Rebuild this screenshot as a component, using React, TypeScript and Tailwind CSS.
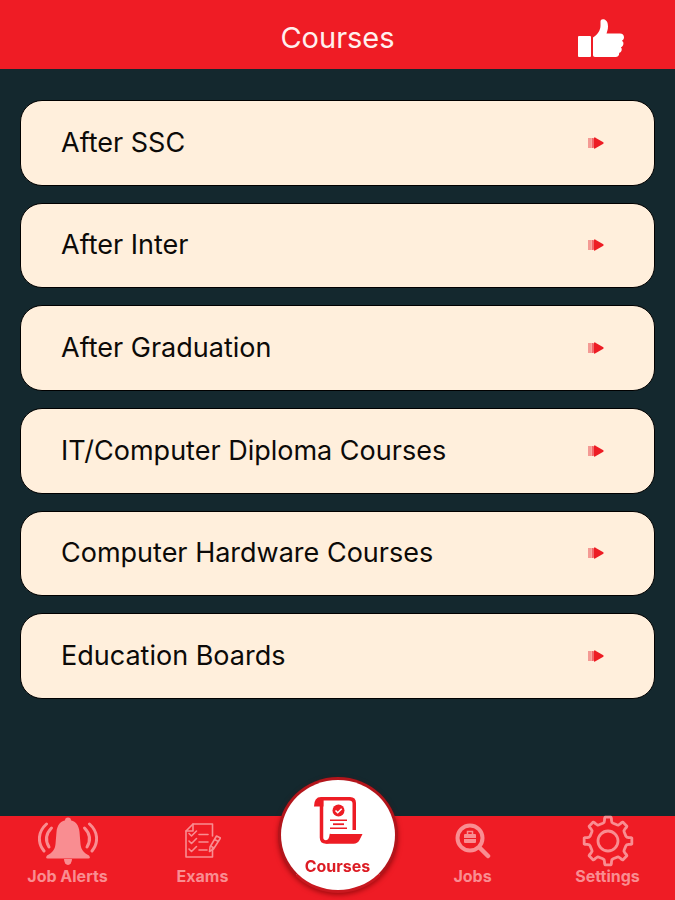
import { useState } from "react";

interface Course {
  id: string;
  title: string;
}

const courses: Course[] = [
  { id: "ssc", title: "After SSC" },
  { id: "inter", title: "After Inter" },
  { id: "graduation", title: "After Graduation" },
  { id: "it-diploma", title: "IT/Computer Diploma Courses" },
  { id: "hardware", title: "Computer Hardware Courses" },
  { id: "boards", title: "Education Boards" },
];

function ThumbIcon() {
  return (
    <svg viewBox="0 0 46 39" className="h-[39px] w-[46px]" fill="#fff" aria-hidden="true">
      <rect x="0" y="17" width="13" height="21" rx="1" />
      <path d="M15 18.500C20 15.500 22.500 11 22.500 6.500V2.500C22.500.8 24 0 25.500.3C29 1 30 4 30 7.500C30 10.500 29 13 28.500 14.500H42C44.500 14.500 46 16 46 18.200C46 20 45 21.300 43.800 21.800C45.300 22.600 45.700 24 45.300 25.500C45 27 44 28 42.800 28.300C43.800 29.200 44 30.500 43.500 31.800C43 33 42.200 33.600 41.200 33.900C41.300 36.500 39.800 38 37.500 38H17C15.700 38 15 37.200 15 36Z" />
    </svg>
  );
}

function PlayArrow() {
  return (
    <svg viewBox="0 0 16 12" className="h-3 w-4 shrink-0" aria-hidden="true">
      <rect x="0" y="1" width="3" height="10" fill="#f49a94" />
      <path d="M3.500 1h2l3 5-3 5h-2z" fill="#f2676a" />
      <path d="M6 .8Q6 0 7 .5L15.300 5.300Q16 6 15.300 6.700L7 11.500Q6 12 6 11.200z" fill="#ed1c24" />
    </svg>
  );
}

function BellIcon() {
  return (
    <svg viewBox="0 0 60 50" className="h-[50px] w-[60px]" fill="currentColor" aria-hidden="true">
      <circle cx="30" cy="4.500" r="3" />
      <path d="M30 4C22.500 4 19 9.500 18.500 16L17.500 28C17 34 14 37 9 39.500Q7 42.500 9.500 42.500H50.500Q53 42.500 51 39.500C46 37 43 34 42.500 28L41.500 16C41 9.500 37.500 4 30 4Z" />
      <path d="M26 43h8a4 6 0 0 1-8 0z" />
      <g fill="none" stroke="currentColor" strokeWidth="3" strokeLinecap="round">
        <path d="M8.500 8C-.5 16 -.5 27 6 35" />
        <path d="M13.500 12C7.500 18 7.500 25 11 31" />
        <path d="M51.500 8C60.500 16 60.500 27 54 35" />
        <path d="M46.500 12C52.500 18 52.500 25 49 31" />
      </g>
    </svg>
  );
}

function ExamIcon() {
  return (
    <svg
      viewBox="0 0 36 36"
      className="h-9 w-9"
      fill="none"
      stroke="currentColor"
      strokeWidth="1.600"
      strokeLinejoin="round"
      strokeLinecap="round"
      aria-hidden="true"
    >
      <path d="M27.500 13V1H8L1 8V34H27.500V25" />
      <path d="M1 8H8V1" />
      <path d="M4 10.500l2.500 2.500L11.500 8M4 18l2.500 2.500 5-5M4 26l2.500 2.500 5-5" />
      <path d="M14 11.500h9M14 19h9M14 27h8" />
      <path d="M31.500 13l4 2-7 11-4 2.500.5-4.500zM29.500 16.500l4 2M25.500 23l3.500 2" />
    </svg>
  );
}

function CertificateIcon() {
  return (
    <svg viewBox="0 0 50 48" className="h-12 w-[50px]" aria-hidden="true">
      <path d="M8 1H37Q43 1 43 7V34H39.500V7.500Q39.500 4.500 36 4.500H10.500V10.500H1Q1 1 8 1Z" fill="#ed1c24" />
      <path
        d="M8.500 4V41.500Q8.500 46 13 46Q17.500 46 18.500 38"
        fill="none"
        stroke="#ed1c24"
        strokeWidth="3.500"
        strokeLinejoin="round"
      />
      <path d="M19 38H49.500L46.500 44Q44.500 47.800 40.500 47.800H12.500Q18 45 19 38Z" fill="#ed1c24" />
      <circle cx="25.500" cy="14.500" r="6" fill="#ed1c24" />
      <path d="M22.500 14.500l2.200 2.200 4-4" fill="none" stroke="#fff" strokeWidth="1.600" />
      <path d="M17 24.200h17M17 32.200h17" stroke="#ed1c24" strokeWidth="1.500" />
      <path d="M20 28.200h11" stroke="#ed1c24" strokeWidth="1.800" />
    </svg>
  );
}

function JobSearchIcon() {
  return (
    <svg viewBox="0 0 36 36" className="h-9 w-9" fill="none" stroke="currentColor" aria-hidden="true">
      <circle cx="15" cy="15" r="12.500" strokeWidth="4" />
      <path d="M24.500 24.500L33 33" strokeWidth="4.500" strokeLinecap="round" />
      <rect x="9" y="11" width="12" height="9" rx="1" fill="currentColor" stroke="none" />
      <path d="M12.500 11V8.500h5V11" strokeWidth="1.500" />
      <path d="M9 15.500h12" stroke="#ed1c24" strokeWidth="1" />
    </svg>
  );
}

// One tooth as [degrees, radius], repeated eight times around the hub
const tooth = [
  [-16, 18.5],
  [-12, 19],
  [-9.5, 21],
  [-8.5, 23],
  [-7, 24],
  [7, 24],
  [8.5, 23],
  [9.5, 21],
  [12, 19],
  [16, 18.5],
];

const gearPoints = Array.from({ length: 8 }, (_, i) =>
  tooth.map(([offset, radius]) => {
    const angle = ((i * 45 + offset) * Math.PI) / 180;
    return `${(26 + radius * Math.sin(angle)).toFixed(2)},${(26 - radius * Math.cos(angle)).toFixed(2)}`;
  })
)
  .flat()
  .join(" ");

function GearIcon() {
  return (
    <svg
      viewBox="0 0 52 52"
      className="h-[52px] w-[52px]"
      fill="none"
      stroke="currentColor"
      strokeWidth="2.800"
      strokeLinejoin="round"
      aria-hidden="true"
    >
      <polygon points={gearPoints} />
      <circle cx="26" cy="26" r="10" />
    </svg>
  );
}

const tabs = [
  { id: "alerts", label: "Job Alerts", icon: <BellIcon /> },
  { id: "exams", label: "Exams", icon: <ExamIcon /> },
  { id: "courses", label: "Courses", icon: <CertificateIcon /> },
  { id: "jobs", label: "Jobs", icon: <JobSearchIcon /> },
  { id: "settings", label: "Settings", icon: <GearIcon /> },
];

export default function App() {
  const [activeTab, setActiveTab] = useState("courses");

  return (
    <div className="flex min-h-screen flex-col bg-[#14282e] font-['Inter',sans-serif]">
      <header className="grid h-[69px] grid-cols-[1fr_auto_1fr] items-center bg-[#ef1c25] pb-px">
        <h1 className="col-start-2 pt-2 text-[29px] leading-8 text-[#fff0ee]">Courses</h1>
        <button type="button" aria-label="Like" className="mr-[51px] cursor-pointer justify-self-end pt-2">
          <ThumbIcon />
        </button>
      </header>

      <main className="flex flex-1 flex-col px-5 pt-[31px] pb-[201px]">
        <ul className="grid flex-1 auto-rows-fr gap-[17px]">
          {courses.map((course) => (
            <li key={course.id} className="flex">
              <button
                type="button"
                className="flex w-full cursor-pointer items-center justify-between rounded-[22px] border border-black bg-[#ffefdc] py-4 pr-[50px] pl-10 text-left text-[27px] leading-8 text-[#0c0a08]"
              >
                {course.title}
                <PlayArrow />
              </button>
            </li>
          ))}
        </ul>
      </main>

      <nav className="fixed inset-x-0 bottom-0 grid h-[84px] grid-cols-5 bg-[#ef1c25]">
        {tabs.map((tab) =>
          tab.id === "courses" ? (
            <div key={tab.id} className="relative">
              <button
                type="button"
                onClick={() => setActiveTab(tab.id)}
                aria-current={activeTab === tab.id ? "page" : undefined}
                className="absolute bottom-[7px] left-1/2 flex h-[116px] w-[120px] -translate-x-1/2 cursor-pointer flex-col items-center rounded-[50%] border-[3px] border-[#b3151b] border-b-[#c9181f] bg-white pt-4 shadow-[0_2px_5px_rgba(110,0,0,0.6)]"
              >
                {tab.icon}
                <span className="mt-3 text-base leading-5 font-bold text-[#dc1c24]">{tab.label}</span>
              </button>
            </div>
          ) : (
            <button
              key={tab.id}
              type="button"
              onClick={() => setActiveTab(tab.id)}
              aria-current={activeTab === tab.id ? "page" : undefined}
              className="flex cursor-pointer flex-col items-center text-[#f98d91]"
            >
              <span className="flex h-[50px] items-center justify-center">{tab.icon}</span>
              <span className="text-base leading-5 font-bold">{tab.label}</span>
            </button>
          )
        )}
      </nav>
    </div>
  );
}
